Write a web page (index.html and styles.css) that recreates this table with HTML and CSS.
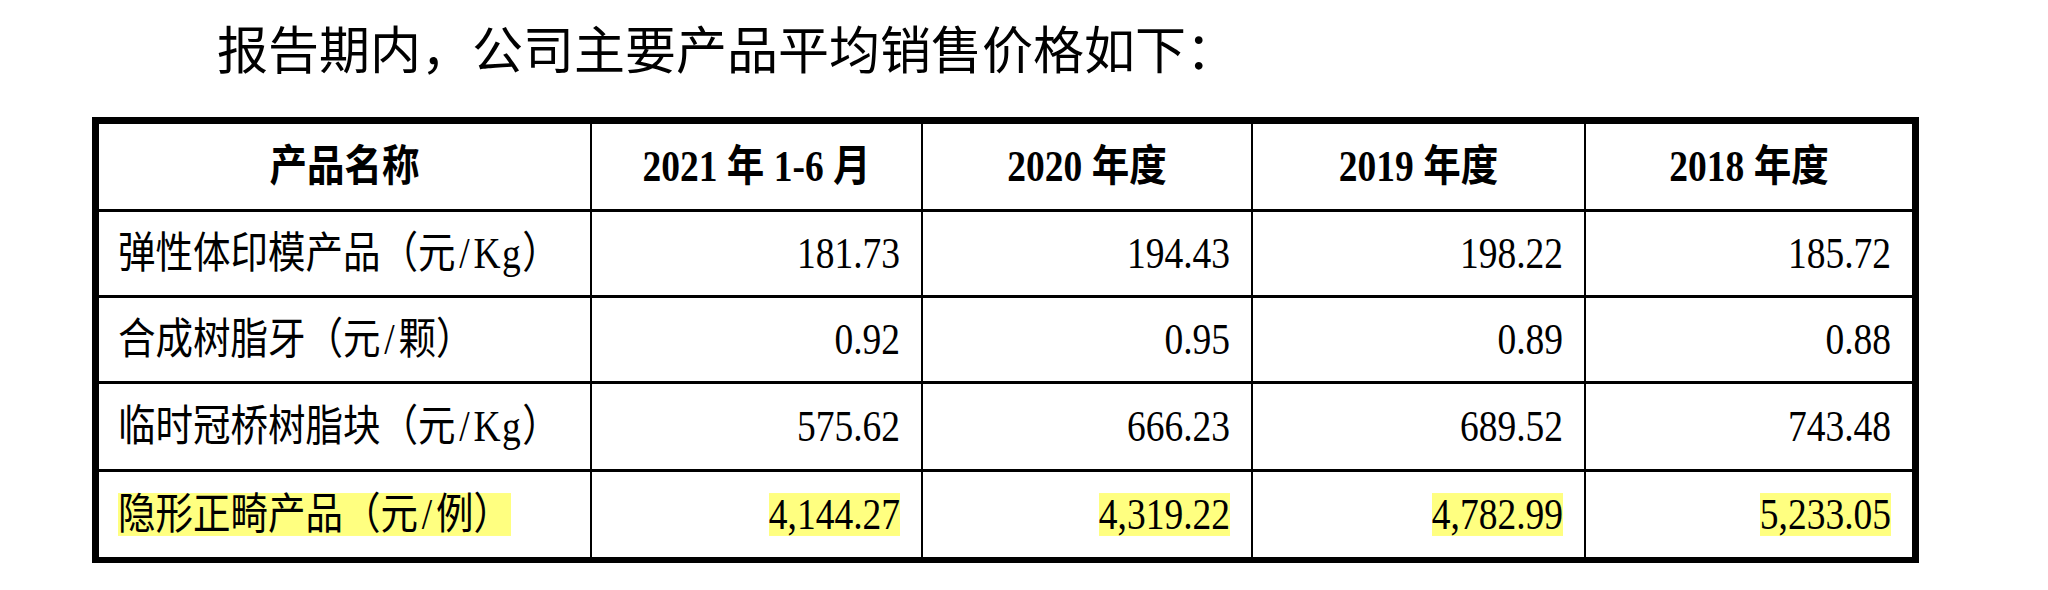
FILE: index.html
```html
<!DOCTYPE html>
<html lang="zh-CN">
<head>
<meta charset="utf-8">
<title>主要产品平均销售价格</title>
<link rel="stylesheet" href="styles.css">
</head>
<body>
<div class="page">
  <p class="title">报告期内，公司主要产品平均销售价格如下：</p>
  <div class="table" role="table">
    <div class="cell head c1" role="columnheader"><span class="t">产品名称</span></div>
    <div class="cell head" role="columnheader"><span class="t">2021 年 1-6 月</span></div>
    <div class="cell head" role="columnheader"><span class="t">2020 年度</span></div>
    <div class="cell head" role="columnheader"><span class="t">2019 年度</span></div>
    <div class="cell head last" role="columnheader"><span class="t">2018 年度</span></div>

    <div class="cell name" role="cell"><span class="t">弹性体印模产品（元<span class="sl">/</span><span class="kg">Kg</span>）</span></div>
    <div class="cell num" role="cell"><span class="t">181.73</span></div>
    <div class="cell num" role="cell"><span class="t">194.43</span></div>
    <div class="cell num" role="cell"><span class="t">198.22</span></div>
    <div class="cell num last" role="cell"><span class="t">185.72</span></div>

    <div class="cell name" role="cell"><span class="t">合成树脂牙（元<span class="sl">/</span>颗）</span></div>
    <div class="cell num" role="cell"><span class="t">0.92</span></div>
    <div class="cell num" role="cell"><span class="t">0.95</span></div>
    <div class="cell num" role="cell"><span class="t">0.89</span></div>
    <div class="cell num last" role="cell"><span class="t">0.88</span></div>

    <div class="cell name" role="cell"><span class="t">临时冠桥树脂块（元<span class="sl">/</span><span class="kg">Kg</span>）</span></div>
    <div class="cell num" role="cell"><span class="t">575.62</span></div>
    <div class="cell num" role="cell"><span class="t">666.23</span></div>
    <div class="cell num" role="cell"><span class="t">689.52</span></div>
    <div class="cell num last" role="cell"><span class="t">743.48</span></div>

    <div class="cell name bottom" role="cell"><span class="t hl">隐形正畸产品（元<span class="sl">/</span>例）</span></div>
    <div class="cell num bottom" role="cell"><span class="t hl">4,144.27</span></div>
    <div class="cell num bottom" role="cell"><span class="t hl">4,319.22</span></div>
    <div class="cell num bottom" role="cell"><span class="t hl">4,782.99</span></div>
    <div class="cell num bottom last" role="cell"><span class="t hl">5,233.05</span></div>
  </div>
</div>
</body>
</html>
```

FILE: styles.css
```css
html, body {
  margin: 0;
  padding: 0;
  background: #ffffff;
}

.page {
  padding: 15px 0 0 92px;
  font-family: "Liberation Serif", "Noto Sans CJK SC", serif;
  color: #000;
  text-spacing-trim: space-all;
}

.title {
  margin: 0 0 27px 125px;
  font-size: 51px;
  line-height: 75px;
  white-space: nowrap;
}

.table {
  display: grid;
  grid-template-columns: 493px 331px 330px 333px 326px;
  grid-template-rows: 88px 86px 86px 88px 85px;
  width: max-content;
  border: 7px solid #000;
  border-bottom-width: 6px;
}

.cell {
  box-sizing: border-box;
  display: flex;
  align-items: center;
  border-right: 2px solid #000;
  border-bottom: 3px solid #000;
  font-size: 37.5px;
  white-space: nowrap;
  overflow: hidden;
}

.cell.last {
  border-right: none;
}

.cell.bottom {
  border-bottom: none;
}

.head {
  justify-content: center;
  font-weight: bold;
}

.name {
  justify-content: flex-start;
  padding-left: 19px;
}

.num {
  justify-content: flex-end;
  padding-right: 21px;
}

.t {
  display: inline-block;
  line-height: 37px;
  transform: scaleY(1.16);
}

.sl {
  padding: 0 0.1em;
}

.kg {
  letter-spacing: 0.04em;
}

.hl {
  background: #ffff80;
}
```
